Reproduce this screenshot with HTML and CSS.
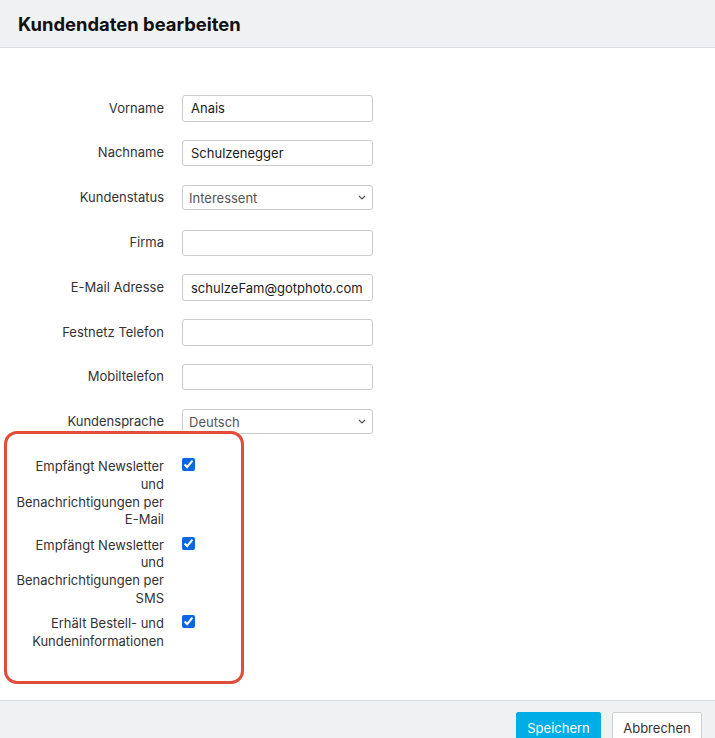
FILE: index.html
```html
<!DOCTYPE html>
<html lang="de">
<head>
<meta charset="utf-8">
<title>Kundendaten bearbeiten</title>
<link rel="stylesheet" href="styles.css">
</head>
<body>
<div class="modal">
  <header class="modal-header">
    <h1>Kundendaten bearbeiten</h1>
  </header>
  <main class="modal-body">
    <form class="form">
      <div class="row"><label class="lbl">Vorname</label><input class="field" type="text" value="Anais"></div>
      <div class="row"><label class="lbl">Nachname</label><input class="field" type="text" value="Schulzenegger"></div>
      <div class="row"><label class="lbl">Kundenstatus</label><select class="field select"><option>Interessent</option></select></div>
      <div class="row"><label class="lbl">Firma</label><input class="field" type="text" value=""></div>
      <div class="row"><label class="lbl">E-Mail Adresse</label><input class="field" type="text" value="schulzeFam@gotphoto.com"></div>
      <div class="row"><label class="lbl">Festnetz Telefon</label><input class="field" type="text" value=""></div>
      <div class="row"><label class="lbl">Mobiltelefon</label><input class="field" type="text" value=""></div>
      <div class="row row-last"><label class="lbl">Kundensprache</label><select class="field select"><option>Deutsch</option></select></div>

      <div class="checks">
        <div class="crow"><label class="lbl clbl">Empfängt Newsletter und Benachrichtigungen per E-Mail</label><input class="cb" type="checkbox" checked></div>
        <div class="crow"><label class="lbl clbl">Empfängt Newsletter und Benachrichtigungen per SMS</label><input class="cb" type="checkbox" checked></div>
        <div class="crow"><label class="lbl clbl">Erhält Bestell- und Kundeninformationen</label><input class="cb" type="checkbox" checked></div>
      </div>
    </form>
    <div class="highlight"></div>
  </main>
  <footer class="modal-footer">
    <button class="btn btn-primary" type="button">Speichern</button>
    <button class="btn btn-default" type="button">Abbrechen</button>
  </footer>
</div>
</body>
</html>
```
FILE: styles.css
```css
html, body {
  margin: 0;
  padding: 0;
  background: #ffffff;
}
body {
  font-family: Inter, "Noto Sans", "Liberation Sans", sans-serif;
  font-size: 13px;
  color: #333333;
}
.modal {
  display: flex;
  flex-direction: column;
}
.modal-header {
  height: 47px;
  background: #f0f1f3;
  border-bottom: 1px solid #dcdde0;
  display: flex;
  align-items: center;
  padding: 0 18px;
}
.modal-header h1 {
  margin: 0;
  font-size: 18.4px;
  font-weight: 700;
  color: #111111;
}
.modal-body {
  position: relative;
  padding: 47px 0 0 0;
  height: 605px;
}
.form {
  display: flex;
  flex-direction: column;
}
.row {
  display: flex;
  align-items: center;
  height: 26.8px;
  margin-bottom: 18px;
}
.row-last {
  margin-bottom: 23px;
}
.lbl {
  width: 150px;
  padding-left: 14px;
  margin-right: 18px;
  text-align: right;
  color: #333333;
  font-size: 13px;
  line-height: 17.6px;
}
.field {
  box-sizing: border-box;
  width: 191px;
  height: 26.5px;
  border: 1px solid #cccccc;
  border-radius: 3px;
  padding: 0 8px;
  font-family: Inter, "Noto Sans", "Liberation Sans", sans-serif;
  font-size: 13px;
  color: #1a1a1a;
  background: #ffffff;
  margin: 0;
}
.select {
  height: 25px;
  padding: 0 6px;
  color: #555555;
  appearance: none;
  -webkit-appearance: none;
  background-image: url("data:image/svg+xml;utf8,<svg xmlns='http://www.w3.org/2000/svg' width='8' height='5' viewBox='0 0 8 5'><path d='M1 1l3 3 3-3' fill='none' stroke='%23555' stroke-width='1.2'/></svg>");
  background-repeat: no-repeat;
  background-position: right 6px center;
}
.checks {
  display: flex;
  flex-direction: column;
}
.crow {
  display: flex;
  align-items: flex-start;
  margin-bottom: 8px;
}
.cb {
  margin: 0;
  width: 13px;
  height: 13px;
  accent-color: #0b66e4;
}
.highlight {
  position: absolute;
  left: 4px;
  top: 383px;
  width: 234px;
  height: 247px;
  border: 3.5px solid #e24c3b;
  border-radius: 13px;
}
.modal-footer {
  border-top: 1px solid #dcdde0;
  background: #f0f1f3;
  height: 60px;
  display: flex;
  justify-content: flex-end;
  align-items: flex-start;
  padding: 11px 13px 0 0;
  gap: 11px;
}
.btn {
  font-family: Inter, "Noto Sans", "Liberation Sans", sans-serif;
  font-size: 13px;
  height: 32px;
  border-radius: 2px;
  cursor: pointer;
  margin: 0;
}
.btn-primary {
  width: 85px;
  background: #00aee6;
  border: 1px solid #00aee6;
  color: #ffffff;
}
.btn-default {
  width: 90px;
  background: #ffffff;
  border: 1px solid #cfd0d3;
  color: #333333;
}
```
